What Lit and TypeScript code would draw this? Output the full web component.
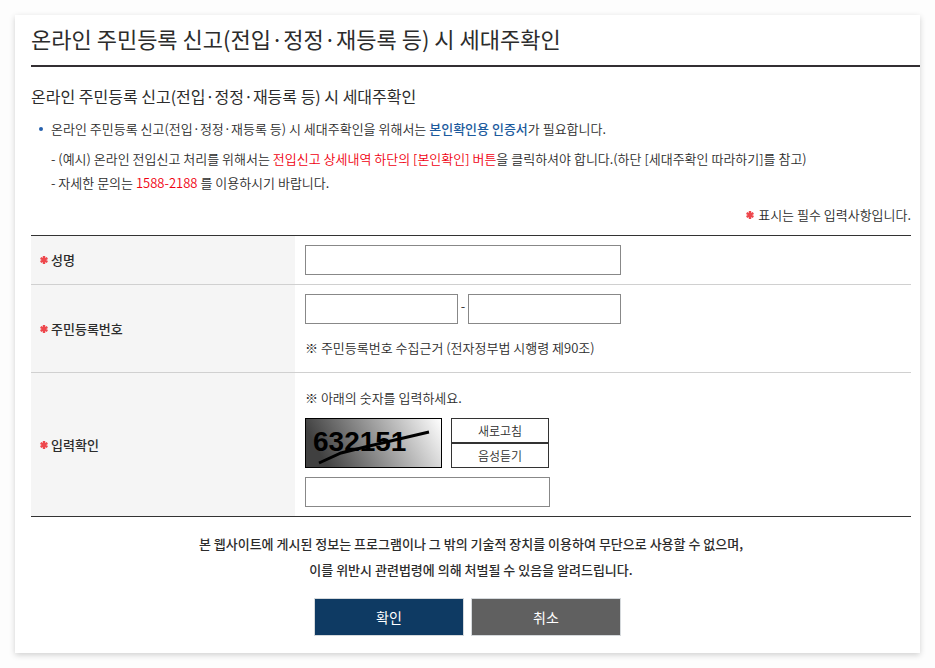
import { LitElement, html, css, svg } from "lit";
import { customElement } from "lit/decorators.js";

const star = html`<svg class="star" viewBox="0 0 8 8" aria-hidden="true">
  ${svg`<path d="M4 0V8M0.6 2L7.4 6M7.4 2L0.6 6" stroke="#ee474c" stroke-width="2.4" />`}
</svg>`;

@customElement("app-root")
export class AppRoot extends LitElement {
  static styles = css`
    :host {
      display: block;
      padding: 15px;
      background: #fdfdfd;
      color: #2c2c2c;
      font-family: "Noto Sans CJK KR", "Noto Sans", sans-serif;
      font-size: 13px;
      font-weight: 350;
      line-height: 24px;
    }
    * {
      box-sizing: border-box;
    }
    .card {
      background: #fff;
      padding: 0 0 17px 16px;
      box-shadow: 0 2px 6px rgba(0, 0, 0, 0.18);
    }
    h1,
    h2,
    p,
    ul {
      margin: 0;
      padding: 0;
      list-style: none;
    }
    h1 {
      padding: 6px 0 10px;
      border-bottom: 2px solid #332f32;
      font-size: 22px;
      font-weight: 400;
      line-height: 34px;
    }
    .content {
      padding-right: 9px;
    }
    h2 {
      padding: 16px 0 2px;
      font-size: 16px;
      font-weight: 400;
      line-height: 26px;
    }
    .bullet {
      display: flex;
      gap: 8px;
      align-items: center;
      padding: 6px 0 6px 8px;
    }
    .dot {
      width: 4px;
      height: 4px;
      border-radius: 50%;
      background: #2560ad;
    }
    .details {
      padding-left: 20px;
    }
    strong {
      color: #1b5a9d;
      font-weight: 500;
    }
    em {
      color: #f00010;
      font-style: normal;
    }
    .required {
      display: flex;
      justify-content: flex-end;
      align-items: center;
      gap: 4px;
      padding: 8px 0;
    }
    .star {
      width: 8px;
      height: 8px;
      flex: none;
    }
    table {
      width: 100%;
      border-collapse: collapse;
      border-top: 1px solid #333;
      border-bottom: 1px solid #333;
    }
    tr + tr {
      border-top: 1px solid #d0d0d0;
    }
    th {
      width: 30%;
      padding: 0 9px;
      background: #f5f5f5;
      font-weight: 500;
      text-align: left;
    }
    th label {
      display: flex;
      align-items: center;
      gap: 3px;
    }
    td {
      padding: 9px 10px;
    }
    input {
      display: block;
      height: 30px;
      padding: 0 6px;
      border: 1px solid #888;
      border-radius: 0;
      background: #fff;
      font: inherit;
    }
    .name {
      width: 316px;
    }
    .pair {
      display: flex;
      width: 316px;
      gap: 3px;
    }
    .pair input {
      flex: 1;
      min-width: 0;
    }
    .note {
      padding: 12px 0 3px;
    }
    .note-top {
      padding: 4px 0 8px;
    }
    .captcha {
      display: flex;
      gap: 9px;
      padding-bottom: 9px;
    }
    .captcha svg {
      width: 137px;
      height: 50px;
    }
    .digits {
      font-family: "Liberation Sans", sans-serif;
      font-size: 28px;
      font-weight: 700;
    }
    .tools {
      display: grid;
      grid-template-rows: 25px 25px;
      width: 98px;
    }
    button {
      border-radius: 0;
      padding: 0;
      font: inherit;
      color: inherit;
    }
    .tools button {
      border: 1px solid #333;
      background: #fff;
      font-size: 12px;
      line-height: 20px;
    }
    .code {
      width: 245px;
    }
    .legal {
      padding-top: 14px;
      font-weight: 500;
      line-height: 26px;
      text-align: center;
    }
    .actions {
      display: flex;
      justify-content: center;
      padding-top: 15px;
    }
    .actions button {
      width: 150px;
      height: 38px;
      margin-right: 7px;
      border: 1px solid #d5d9dc;
      background: #606060;
      color: #fff;
      font-size: 14px;
      font-weight: 400;
    }
    .actions .ok {
      background: #0e3a63;
    }
  `;

  render() {
    return html`
      <main class="card">
        <h1>온라인 주민등록 신고(전입·정정·재등록 등) 시 세대주확인</h1>
        <form class="content" @submit=${(e: Event) => e.preventDefault()}>
          <h2>온라인 주민등록 신고(전입·정정·재등록 등) 시 세대주확인</h2>
          <div class="bullet">
            <span class="dot"></span>
            <p>온라인 주민등록 신고(전입·정정·재등록 등) 시 세대주확인을 위해서는 <strong>본인확인용 인증서</strong>가 필요합니다.</p>
          </div>
          <ul class="details">
            <li>- (예시) 온라인 전입신고 처리를 위해서는 <em>전입신고 상세내역 하단의 [본인확인] 버튼</em>을 클릭하셔야 합니다.(하단 [세대주확인 따라하기]를 참고)</li>
            <li>- 자세한 문의는 <em>1588-2188</em> 를 이용하시기 바랍니다.</li>
          </ul>
          <p class="required">${star}<span>표시는 필수 입력사항입니다.</span></p>
          <table>
            <tr>
              <th scope="row"><label for="name">${star}성명</label></th>
              <td><input id="name" class="name" type="text" /></td>
            </tr>
            <tr>
              <th scope="row"><label for="rrn">${star}주민등록번호</label></th>
              <td>
                <div class="pair">
                  <input id="rrn" type="text" maxlength="6" />
                  <span>-</span>
                  <input type="password" maxlength="7" aria-label="주민등록번호 뒷자리" />
                </div>
                <p class="note">※ 주민등록번호 수집근거 (전자정부법 시행령 제90조)</p>
              </td>
            </tr>
            <tr>
              <th scope="row"><label for="code">${star}입력확인</label></th>
              <td>
                <p class="note-top">※ 아래의 숫자를 입력하세요.</p>
                <div class="captcha">
                  <svg viewBox="0 0 137 50">
                    <defs>
                      <linearGradient id="shade" x1="0" y1="0.2" x2="1" y2="0">
                        <stop offset="0" stop-color="#404040" />
                        <stop offset="1" stop-color="#fff" />
                      </linearGradient>
                    </defs>
                    <rect x="0.5" y="0.5" width="136" height="49" fill="url(#shade)" stroke="#000" />
                    <text class="digits" x="8" y="33">632151</text>
                    <path d="M14 45L36 35L60 29L124 14" fill="none" stroke="#000" stroke-width="3" />
                  </svg>
                  <div class="tools">
                    <button type="button">새로고침</button>
                    <button type="button">음성듣기</button>
                  </div>
                </div>
                <input id="code" class="code" type="text" />
              </td>
            </tr>
          </table>
          <p class="legal">
            본 웹사이트에 게시된 정보는 프로그램이나 그 밖의 기술적 장치를 이용하여 무단으로 사용할 수 없으며,<br />
            이를 위반시 관련법령에 의해 처벌될 수 있음을 알려드립니다.
          </p>
          <div class="actions">
            <button class="ok" type="submit">확인</button>
            <button type="button">취소</button>
          </div>
        </form>
      </main>
    `;
  }
}
